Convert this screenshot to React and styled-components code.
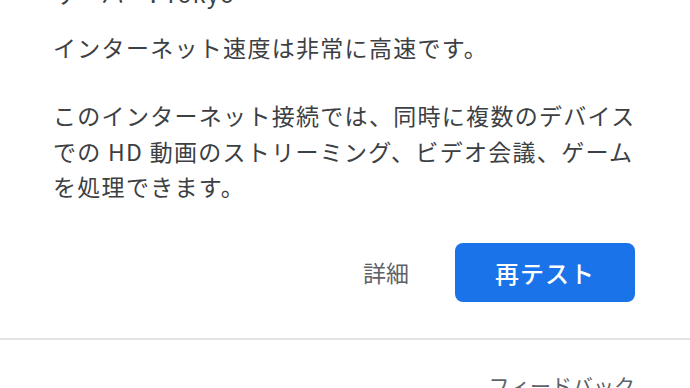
import React from "react";
import styled, { createGlobalStyle } from "styled-components";

const Global = createGlobalStyle`
  html, body {
    margin: 0;
    padding: 0;
    background: #ffffff;
    overflow: hidden;
  }
  body {
    font-family: "Noto Sans CJK JP", "Noto Sans", sans-serif;
  }
`;

const Page = styled.div`
  width: 690px;
  height: 388px;
  overflow: hidden;
  background: #fff;
  display: flex;
  flex-direction: column;
`;

const Content = styled.section`
  padding: 0 45px 0 53px;
  display: flex;
  flex-direction: column;
  margin-top: -24px;
`;

const Text = styled.p`
  margin: 0;
  margin-top: ${(p) => p.$gap || 0}px;
  font-size: 23px;
  line-height: 35.5px;
  color: #3c4043;
  letter-spacing: 1.3px;
`;

const Actions = styled.div`
  display: flex;
  justify-content: flex-end;
  align-items: center;
  gap: 22px;
  margin-top: 38px;
  padding-right: 10px;
`;

const TextButton = styled.button`
  border: none;
  background: transparent;
  font-family: inherit;
  font-size: 23px;
  color: #5f6368;
  padding: 0 24px;
  height: 59px;
  cursor: pointer;
`;

const PrimaryButton = styled.button`
  border: none;
  background: #1a73e8;
  color: #fff;
  font-family: inherit;
  font-size: 24px;
  font-weight: 500;
  letter-spacing: 1px;
  width: 180px;
  height: 59px;
  border-radius: 8px;
  cursor: pointer;
`;

const Divider = styled.hr`
  border: none;
  border-top: 2px solid #e3e3e3;
  margin: 36px 0 0;
  width: 100%;
`;

const Footer = styled.div`
  display: flex;
  justify-content: flex-end;
  padding: 0 55px 0 53px;
  margin-top: 27px;
`;

const FooterLink = styled.span`
  font-size: 21px;
  line-height: 36px;
  color: #5f6368;
`;

export default function App() {
  return (
    <Page>
      <Global />
      <Content>
        <Text>サーバー: Tokyo</Text>
        <Text $gap={18}>インターネット速度は非常に高速です。</Text>
        <Text $gap={33}>
          このインターネット接続では、同時に複数のデバイス
          <br />
          での HD 動画のストリーミング、ビデオ会議、ゲーム
          <br />
          を処理できます。
        </Text>
        <Actions>
          <TextButton>詳細</TextButton>
          <PrimaryButton>再テスト</PrimaryButton>
        </Actions>
      </Content>
      <Divider />
      <Footer>
        <FooterLink>フィードバック</FooterLink>
      </Footer>
    </Page>
  );
}
